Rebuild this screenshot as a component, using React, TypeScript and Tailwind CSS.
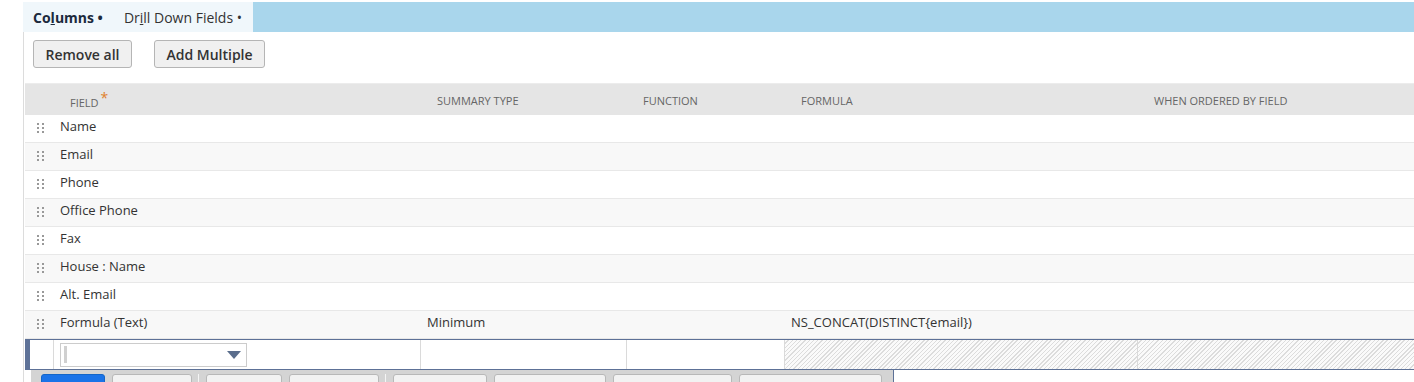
import React from "react";

const rows: { field: string; summary?: string; formula?: string }[] = [
  { field: "Name" },
  { field: "Email" },
  { field: "Phone" },
  { field: "Office Phone" },
  { field: "Fax" },
  { field: "House : Name" },
  { field: "Alt. Email" },
  { field: "Formula (Text)", summary: "Minimum", formula: "NS_CONCAT(DISTINCT{email})" },
];

const cols = "grid grid-cols-[29px_367px_206px_158px_353px_1fr]";

const DragHandle = () => (
  <svg width="7" height="11" viewBox="0 0 7 11" className="text-[#999]">
    {[0, 4, 8].map((y) => (
      <g key={y} fill="currentColor">
        <rect x="0" y={y} width="2" height="2" />
        <rect x="5" y={y} width="2" height="2" />
      </g>
    ))}
  </svg>
);

const toolbarButtons: { w: string; blue?: boolean; sepAfter?: boolean }[] = [
  { w: "w-[64px]", blue: true },
  { w: "w-[80px]", sepAfter: true },
  { w: "w-[76px]" },
  { w: "w-[90px]", sepAfter: true },
  { w: "w-[94px]" },
  { w: "w-[112px]" },
  { w: "w-[119px]" },
  { w: "w-[143px]" },
];

export default function App() {
  return (
    <div className="w-[1414px] h-[382px] overflow-hidden bg-white pt-[2px] font-['Open_Sans',sans-serif] text-[#333]">
      {/* tabs */}
      <div className="flex h-[30px] ml-[23px]">
        <div className="flex items-center bg-[#f0f7fb] pl-[10px] pr-[11px] text-[14px]">
          <span className="font-bold text-[#1b2a3d]">
            Co<span className="underline">l</span>umns •
          </span>
          <span className="ml-[21px] text-[#333]">
            Dr<span className="underline">i</span>ll Down Fields •
          </span>
        </div>
        <div className="flex-1 bg-[#a9d6ec]" />
      </div>

      <div className="ml-[23px] border-l border-[#dcdcdc] pl-[1px] h-full">
        {/* buttons */}
        <div className="flex gap-[22px] pl-[8px] pt-[8px]">
          <button className="h-[28px] w-[99px] rounded-[3px] border border-[#b5b5b5] bg-[#f0f0f0] text-[14px] font-semibold text-[#333]">
            Remove all
          </button>
          <button className="h-[28px] w-[111px] rounded-[3px] border border-[#b5b5b5] bg-[#f0f0f0] text-[14px] font-semibold text-[#333]">
            Add Multiple
          </button>
        </div>

        {/* header */}
        <div className={`${cols} mt-[15px] h-[32px] items-center pt-[4px] border-t border-[#ececec] bg-[#e5e5e5] text-[11px] uppercase text-[#666]`}>
          <div />
          <div className="pl-[16px]">
            Field<span className="ml-[2px] relative top-[-4px] text-[14px] text-[#e0822c]">*</span>
          </div>
          <div className="pl-[16px]">Summary Type</div>
          <div className="pl-[16px]">Function</div>
          <div className="pl-[16px]">Formula</div>
          <div className="pl-[16px]">When Ordered by Field</div>
        </div>

        {/* rows */}
        {rows.map((r, i) => (
          <div
            key={r.field}
            className={`${cols} h-[28px] items-center pb-[4px] border-b border-[#e8e8e8] text-[13px] ${i % 2 === 1 ? "bg-[#f8f8f8]" : "bg-white"}`}
          >
            <div className="flex justify-center pl-[2px] pt-[4px]">
              <DragHandle />
            </div>
            <div className="pl-[6px]">{r.field}</div>
            <div className="pl-[6px]">{r.summary}</div>
            <div className="pl-[6px]" />
            <div className="pl-[6px]">{r.formula}</div>
            <div />
          </div>
        ))}

        {/* edit row */}
        <div className={`${cols} h-[31px] border-y border-[#5d7197]`}>
          <div className="border-l-[5px] border-[#5d7197] border-r border-r-[#dadada]" />
          <div className="flex items-center pl-[6px] border-r border-[#dadada]">
            <div className="flex h-[24px] w-[187px] items-center justify-between border border-[#cccccc] pl-[3px] pr-[5px]">
              <div className="h-[17px] w-[3px] bg-[#d0d0d0]" />
              <svg width="14" height="8" viewBox="0 0 14 8">
                <path d="M0 0h14L7 8z" fill="#5a6d8c" />
              </svg>
            </div>
          </div>
          <div className="border-r border-[#dadada]" />
          <div className="border-r border-[#dadada]" />
          <div className="border-r border-[#dadada] bg-[repeating-linear-gradient(135deg,#fafafa_0px,#fafafa_2px,#dcdcdc_2px,#dcdcdc_3px)]" />
          <div className="bg-[repeating-linear-gradient(135deg,#fafafa_0px,#fafafa_2px,#dcdcdc_2px,#dcdcdc_3px)]" />
        </div>

        {/* bottom toolbar */}
        <div className="ml-[6px] flex h-[20px] w-[863px] items-start border-r border-[#5d7197] bg-[#d4d4d4] pl-[10px] pt-[4px]">
          {toolbarButtons.map((b, i) => (
            <React.Fragment key={i}>
              <div
                className={`${b.w} h-[20px] shrink-0 rounded-t-[3px] border ${b.blue ? "border-[#1466c8] bg-[#1a73e8]" : "border-[#b8b8b8] bg-[#f2f2f2]"} ${i < toolbarButtons.length - 1 && !b.sepAfter ? "mr-[7px]" : ""}`}
              />
              {b.sepAfter && <div className="ml-[6px] mr-[7px] h-[12px] w-px bg-[#f5f5f5]" />}
            </React.Fragment>
          ))}
        </div>
      </div>
    </div>
  );
}
